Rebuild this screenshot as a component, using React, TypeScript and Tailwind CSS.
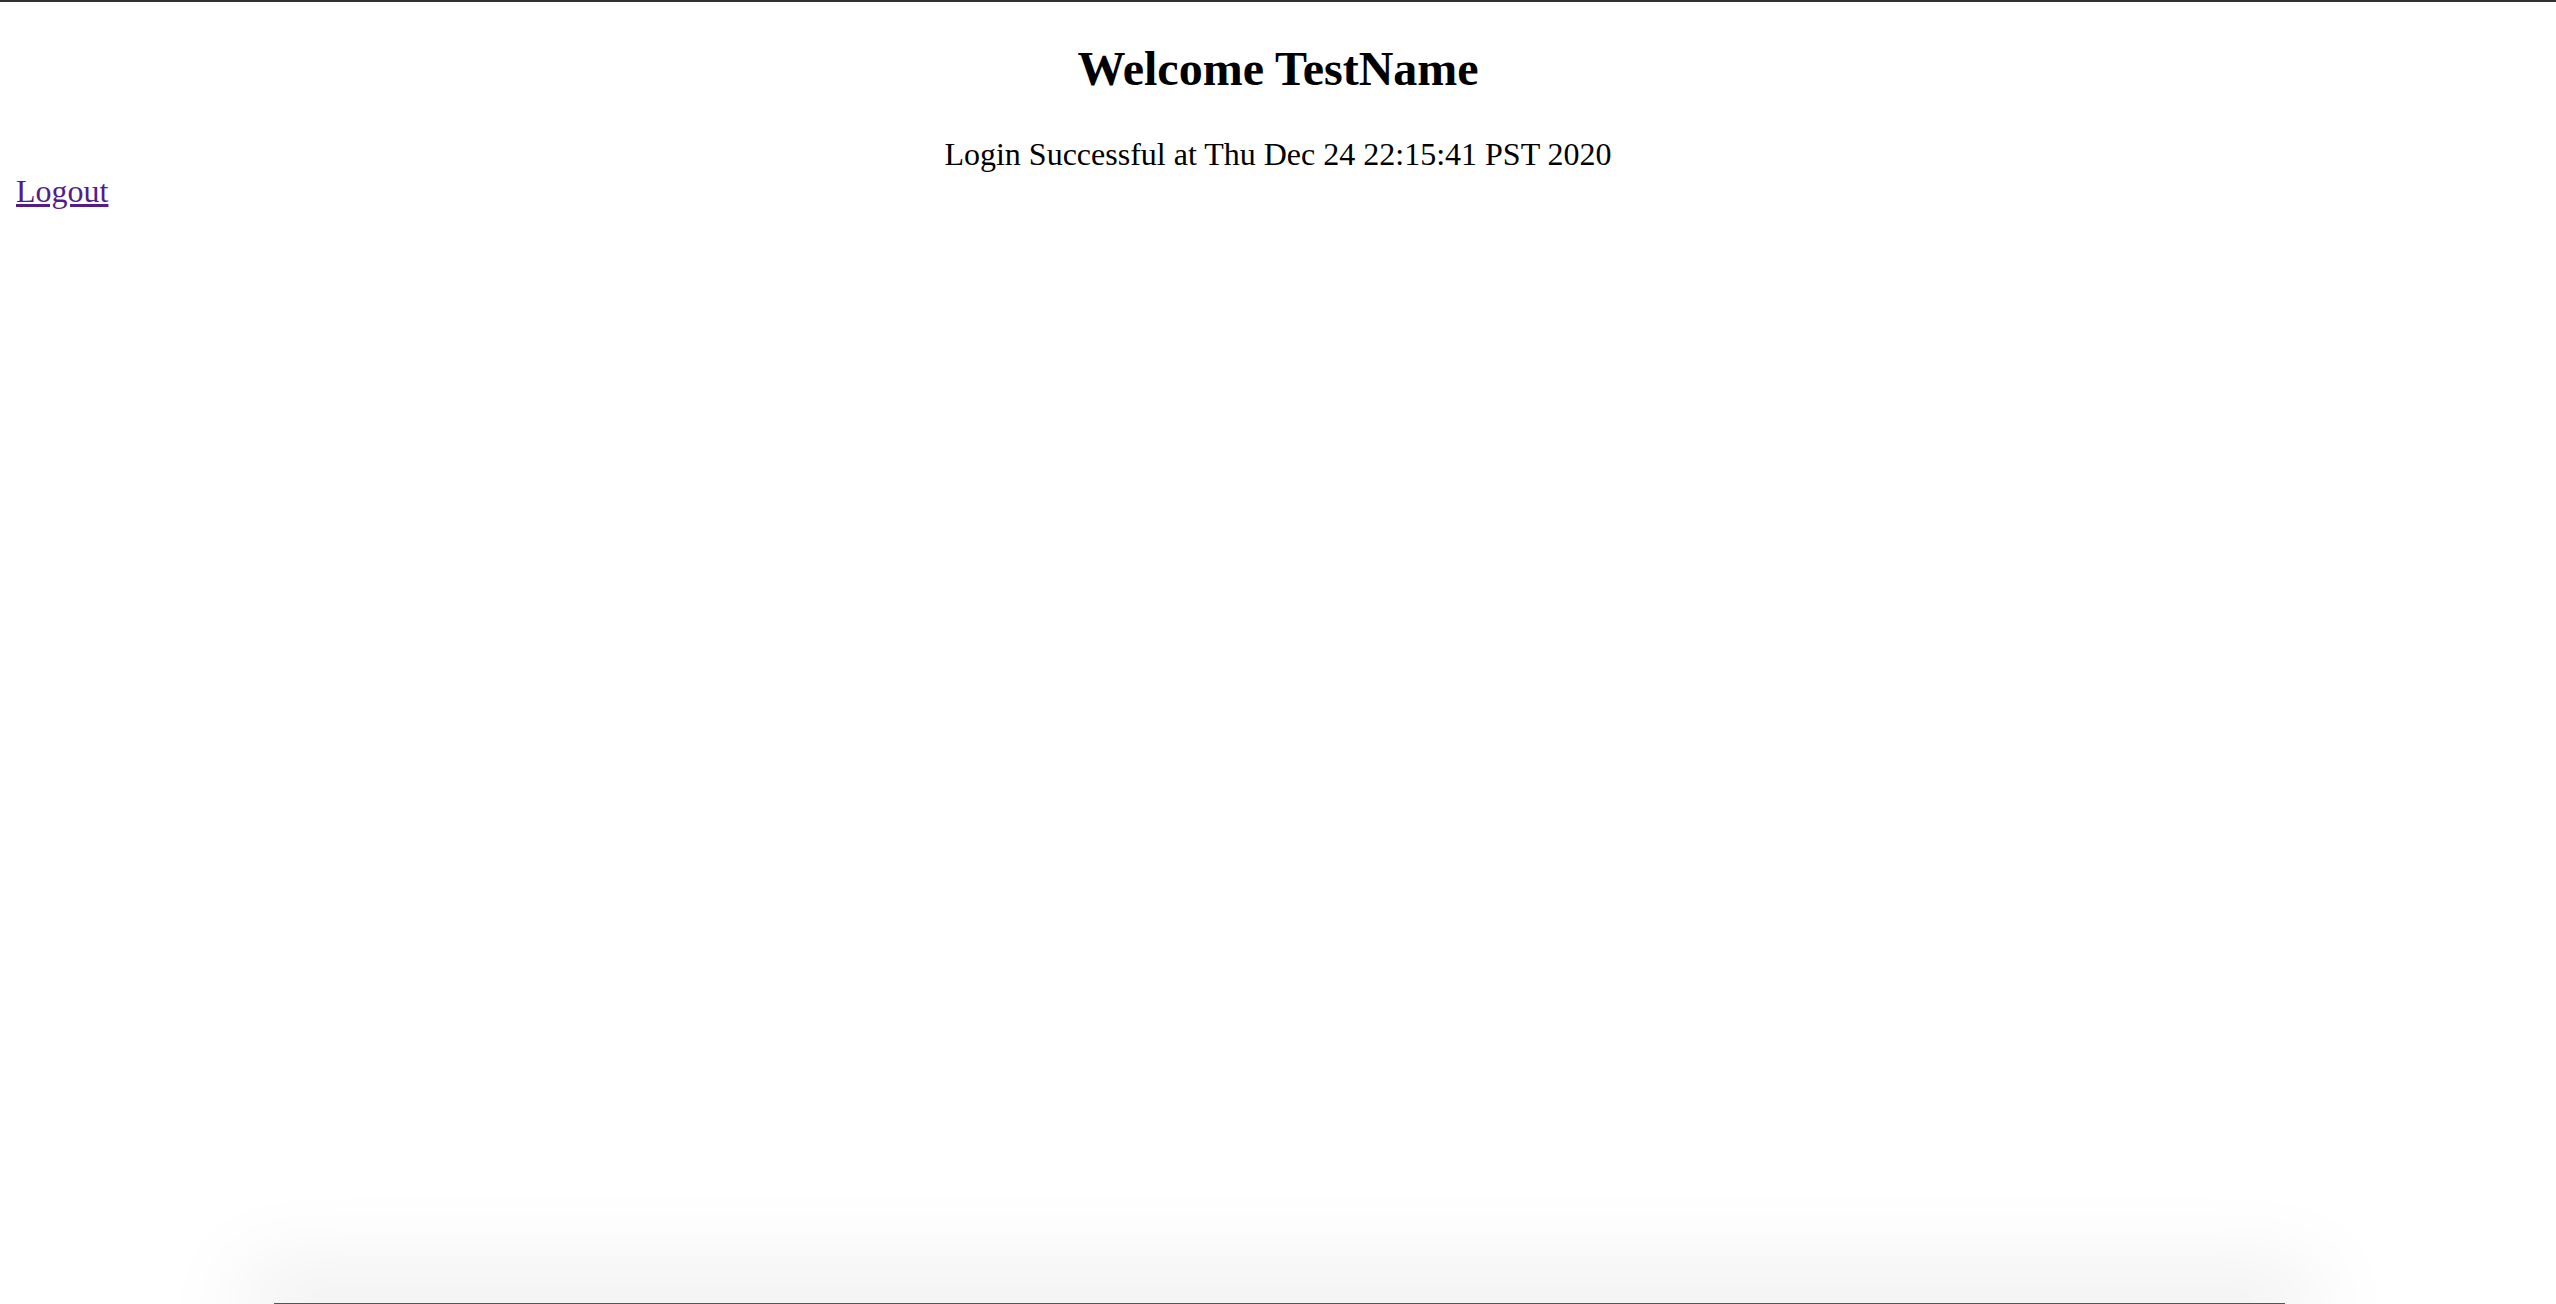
import React from 'react';

const serif = { fontFamily: '"Liberation Serif", "Times New Roman", serif' };

const App: React.FC = () => {
  return (
    <div className="relative h-screen w-full overflow-hidden bg-white text-black" style={serif}>
      {/* window top edge */}
      <div className="h-[2px] w-full bg-[#333333]" />

      <div className="px-4 pt-[40px]">
        <h2 className="text-center text-[48px] font-bold leading-[53px]">Welcome TestName</h2>
        <div className="mt-[42px] text-center text-[32px] leading-[35px]">
          Login Successful at Thu Dec 24 22:15:41 PST 2020
        </div>
        <a href="#" className="mt-[2px] block w-fit text-[32px] leading-[35px] text-[#551a8b] underline">
          Logout
        </a>
      </div>

      {/* edge of the window underneath, with its shadow */}
      <div className="absolute bottom-0 left-[274px] right-[271px] h-px bg-[#555555] shadow-[0_0_90px_32px_rgba(0,0,0,0.08)]" />
    </div>
  );
};

export default App;
